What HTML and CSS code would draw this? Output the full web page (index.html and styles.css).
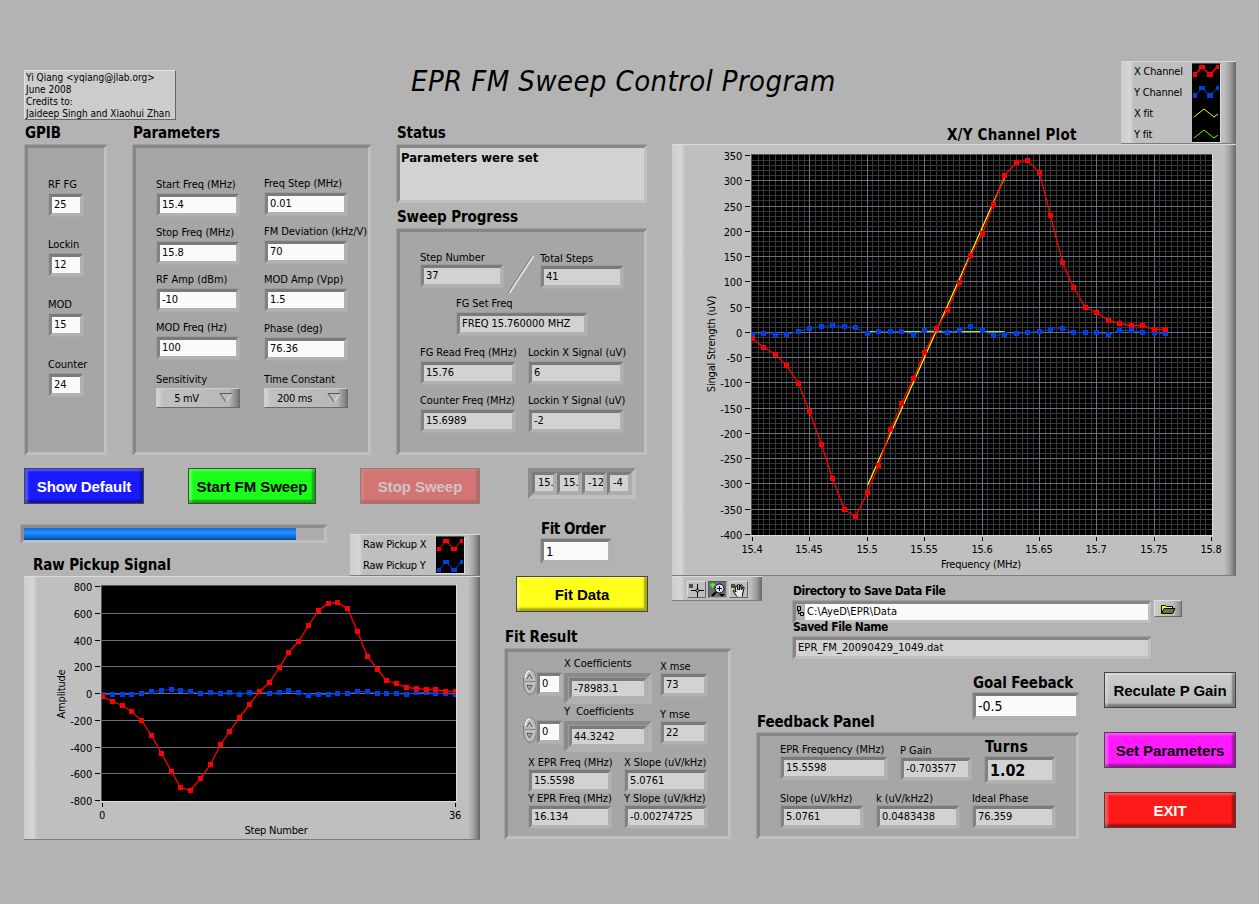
FILE: index.html
```
<!DOCTYPE html>
<html lang="en">

<head>
    <meta charset="UTF-8">
    <meta name="viewport" content="width=device-width, initial-scale=1.0">
    <link rel="stylesheet" href="styles.css">
    <title>EPR FM Sweep Control Program</title>
</head>

<body>
    <div class="front-panel">

        <div class="left-side">
            <header class="top">
                <div class="credits">Yi Qiang &lt;yqiang@jlab.org&gt;<br>June 2008<br>Credits to:<br>Jaideep Singh and Xiaohui Zhan</div>
                <h1>EPR FM Sweep Control Program</h1>
            </header>

            <div class="settings">
                <section class="gpib">
                    <h2>GPIB</h2>
                    <div class="frame">
                        <div class="item"><label>RF FG</label><div class="box control">25</div></div>
                        <div class="item"><label>Lockin</label><div class="box control">12</div></div>
                        <div class="item"><label>MOD</label><div class="box control">15</div></div>
                        <div class="item"><label>Counter</label><div class="box control">24</div></div>
                    </div>
                </section>

                <section class="parameters">
                    <h2>Parameters</h2>
                    <div class="frame">
                        <div class="param-col first">
                            <div class="item"><label>Start Freq (MHz)</label><div class="box control">15.4</div></div>
                            <div class="item"><label>Stop Freq (MHz)</label><div class="box control">15.8</div></div>
                            <div class="item"><label>RF Amp (dBm)</label><div class="box control">-10</div></div>
                            <div class="item"><label>MOD Freq (Hz)</label><div class="box control">100</div></div>
                            <div class="item"><label>Sensitivity</label>
                                <div class="ring"><span>5 mV</span><svg width="14" height="10"><path d="M13 .5L7 9" stroke="#e6e6e6" fill="none"/><path d="M13 .5H1L7 9" stroke="#555" fill="none"/></svg></div>
                            </div>
                        </div>
                        <div class="param-col second">
                            <div class="item"><label>Freq Step (MHz)</label><div class="box control">0.01</div></div>
                            <div class="item"><label>FM Deviation (kHz/V)</label><div class="box control">70</div></div>
                            <div class="item"><label>MOD Amp (Vpp)</label><div class="box control">1.5</div></div>
                            <div class="item"><label>Phase (deg)</label><div class="box control">76.36</div></div>
                            <div class="item"><label>Time Constant</label>
                                <div class="ring"><span>200 ms</span><svg width="14" height="10"><path d="M13 .5L7 9" stroke="#e6e6e6" fill="none"/><path d="M13 .5H1L7 9" stroke="#555" fill="none"/></svg></div>
                            </div>
                        </div>
                    </div>
                </section>

                <section class="status">
                    <h2>Status</h2>
                    <div class="frame message">Parameters were set</div>
                    <h2>Sweep Progress</h2>
                    <div class="frame progress">
                        <div class="steps">
                            <div class="item"><label>Step Number</label><div class="box">37</div></div>
                            <svg class="slash" width="28" height="40"><path d="M25 1L1 38" stroke="#6e6e6e"/><path d="M26.5 1L2.5 38" stroke="#e8e8e8" stroke-width="1.5"/></svg>
                            <div class="item total"><label>Total Steps</label><div class="box">41</div></div>
                        </div>
                        <div class="item set-freq"><label>FG Set Freq</label><div class="box">FREQ 15.760000 MHZ</div></div>
                        <div class="readings">
                            <div class="item"><label>FG Read Freq (MHz)</label><div class="box">15.76</div></div>
                            <div class="item"><label>Lockin X Signal (uV)</label><div class="box">6</div></div>
                            <div class="item"><label>Counter Freq (MHz)</label><div class="box">15.6989</div></div>
                            <div class="item"><label>Lockin Y Signal (uV)</label><div class="box">-2</div></div>
                        </div>
                    </div>
                </section>
            </div>

            <div class="actions">
                <button class="btn blue">Show Default</button>
                <button class="btn green">Start FM Sweep</button>
                <button class="btn disabled">Stop Sweep</button>
                <div class="array">
                    <div class="cell">15.</div>
                    <div class="cell">15.</div>
                    <div class="cell">-12</div>
                    <div class="cell">-4</div>
                </div>
            </div>

            <div class="lower-left">
                <div class="raw">
                    <div class="bar"><div class="bar-fill" style="width: 272px"></div></div>
                    <div class="raw-head">
                        <h2>Raw Pickup Signal</h2>
                        <div class="legend">
                            <div class="names"><span>Raw Pickup X</span><span>Raw Pickup Y</span></div>
                            <svg class="swatches" width="29" height="38">
                                <g fill="#f00"><path d="M3 12L10 4 18 12 25 4" stroke="#f00" fill="none"/><path d="M1 10h4v4h-4zM7 2h6v4h-6zM15 10h6v4h-6zM24 2h3v4h-3z"/></g>
                                <g fill="#0040e0"><path d="M3 33L10 25 18 33 25 25" stroke="#0040e0" fill="none"/><path d="M1 31h4v4h-4zM7 23h6v4h-6zM15 31h6v4h-6zM24 23h3v4h-3z"/></g>
                            </svg>
                        </div>
                    </div>
                    <div class="graph"><svg id="raw-graph" width="456" height="264"></svg></div>
                </div>

                <div class="fit">
                    <div class="fit-order"><h2>Fit Order</h2><div class="box control">1</div></div>
                    <button class="btn yellow">Fit Data</button>
                    <h2>Fit Result</h2>
                    <div class="frame">
                        <div class="coef">
                            <div class="index">
                                <svg width="14" height="26"><ellipse cx="7" cy="13" rx="6.5" ry="12.5" fill="#bdbdbd" stroke="#777"/><path d="M2 9Q3 2 7 1.500" stroke="#eee" stroke-width="1.500" fill="none"/><path d="M0 12.500h14" stroke="#888"/><path d="M4 10L6.500 5 9 10" stroke="#555" fill="none"/><path d="M4 16.500h5L6.500 21z" stroke="#555" fill="none"/></svg>
                                <div class="box control">0</div>
                            </div>
                            <div class="item value"><label>X Coefficients</label><div class="nested"><div class="box">-78983.1</div></div></div>
                            <div class="item mse"><label>X mse</label><div class="box">73</div></div>
                        </div>
                        <div class="coef">
                            <div class="index">
                                <svg width="14" height="26"><ellipse cx="7" cy="13" rx="6.5" ry="12.5" fill="#bdbdbd" stroke="#777"/><path d="M2 9Q3 2 7 1.500" stroke="#eee" stroke-width="1.500" fill="none"/><path d="M0 12.500h14" stroke="#888"/><path d="M4 10L6.500 5 9 10" stroke="#555" fill="none"/><path d="M4 16.500h5L6.500 21z" stroke="#555" fill="none"/></svg>
                                <div class="box control">0</div>
                            </div>
                            <div class="item value"><label>Y&nbsp; Coefficients</label><div class="nested"><div class="box">44.3242</div></div></div>
                            <div class="item mse"><label>Y mse</label><div class="box">22</div></div>
                        </div>
                        <div class="slopes">
                            <div class="item"><label>X EPR Freq (MHz)</label><div class="box">15.5598</div></div>
                            <div class="item"><label>X Slope (uV/kHz)</label><div class="box">5.0761</div></div>
                            <div class="item"><label>Y EPR Freq (MHz)</label><div class="box">16.134</div></div>
                            <div class="item"><label>Y Slope (uV/kHz)</label><div class="box">-0.00274725</div></div>
                        </div>
                    </div>
                </div>
            </div>
        </div>

        <div class="right-side">
            <div class="plot-head">
                <h2>X/Y Channel Plot</h2>
                <div class="legend">
                    <div class="names"><span>X Channel</span><span>Y Channel</span><span>X fit</span><span>Y fit</span></div>
                    <svg class="swatches" width="29" height="80">
                        <g fill="#f00"><path d="M3 11L10 3 18 11 25 3" stroke="#f00" stroke-width="1.500" fill="none"/><path d="M1 8h4v5h-4zM7 1h6v4h-6zM15 8h6v5h-6zM24 1h3v4h-3z"/></g>
                        <g fill="#0040e0"><path d="M3 32L10 24 18 32 25 24" stroke="#0040e0" fill="none"/><path d="M1 29h4v5h-4zM7 22h6v4h-6zM15 29h6v5h-6zM24 22h3v4h-3z"/></g>
                        <path d="M2 53L12 45 22 53 26 50" stroke="#ff0" fill="none"/>
                        <path d="M2 74L12 66 22 74 26 71" stroke="#60ff10" fill="none"/>
                    </svg>
                </div>
            </div>
            <div class="graph"><svg id="xy-graph" width="564" height="432"></svg></div>

            <div class="below-plot">
                <div class="palette">
                    <div class="tool"><svg width="18" height="16"><path d="M1 2h4v4h-4z" fill="#3d5c2e"/><path d="M3 8.500h5M11 8.500h5M9.500 2v5M9.500 10v5" stroke="#000"/><circle cx="9.500" cy="8.500" r="1.500" fill="none" stroke="#000"/></svg></div>
                    <div class="tool pressed"><svg width="18" height="16"><path d="M1 3h5M3.500 1v5" stroke="#4f2" stroke-width="1.500"/><circle cx="10.500" cy="6.500" r="4.500" fill="#dcdcf4" stroke="#000"/><path d="M8 6.500h5M10.500 4v5" stroke="#000"/><path d="M7 10L3 14" stroke="#000" stroke-width="2"/><path d="M10 12h6l-3 3z"/></svg></div>
                    <div class="tool"><svg width="18" height="16"><path d="M1 2h4v4h-4z" fill="#3d5c2e"/><path d="M7 14.500L3 9Q3.500 7.500 6 10L5 4.500Q6 3 7 4.500L8 8 7.500 3Q8.500 1 9.500 3V8L10.500 3Q12 2 12 3.500L11.500 8 13 5Q14.500 4.500 14 6.500L12.500 12V14.500" fill="#e8e8e8" stroke="#000"/></svg></div>
                </div>
                <div class="files">
                    <h3>Directory to Save Data File</h3>
                    <div class="path-row">
                        <div class="box control path"><svg width="8" height="14"><path d="M1.500 2.500h3v4h-3zM4.500 8.500h3v3h-3zM2.500 6.500v3h2" stroke="#000" fill="none"/></svg><span>C:\AyeD\EPR\Data</span></div>
                        <button class="browse"><svg width="16" height="12"><path d="M1.500 10V2.500h4l1 1h6V5" fill="#ff0" stroke="#000"/><path d="M1.500 10.500L4 5.500h11L12.500 10.500z" fill="#77752c" stroke="#000"/></svg></button>
                    </div>
                    <h3 class="saved">Saved File Name</h3>
                    <div class="box path">EPR_FM_20090429_1049.dat</div>
                </div>
            </div>

            <div class="lower-right">
                <div class="feedback">
                    <div class="goal"><h2>Goal Feeback</h2><div class="box control">-0.5</div></div>
                    <h2>Feedback Panel</h2>
                    <div class="frame">
                        <div class="feedback-row">
                            <div class="item epr"><label>EPR Frequency (MHz)</label><div class="box">15.5598</div></div>
                            <div class="item gain"><label>P Gain</label><div class="box">-0.703577</div></div>
                            <div class="item turns"><label>Turns</label><div class="box">1.02</div></div>
                        </div>
                        <div class="feedback-row second">
                            <div class="item"><label>Slope (uV/kHz)</label><div class="box">5.0761</div></div>
                            <div class="item"><label>k (uV/kHz2)</label><div class="box">0.0483438</div></div>
                            <div class="item"><label>Ideal Phase</label><div class="box">76.359</div></div>
                        </div>
                    </div>
                </div>
                <div class="main-buttons">
                    <button class="btn gray">Reculate P Gain</button>
                    <button class="btn magenta">Set Parameters</button>
                    <button class="btn red">EXIT</button>
                </div>
            </div>
        </div>

    </div>
    <script src="script.js"></script>
</body>

</html>
```

FILE: styles.css
```
* {
    box-sizing: border-box;
}

body {
    margin: 0;
    background-color: #b3b3b3;
    font-family: 'DejaVu Sans Condensed', 'DejaVu Sans', sans-serif;
    font-stretch: condensed;
    font-size: 11px;
    letter-spacing: -0.05px;
    color: #000;
}

h1, h2, h3 {
    margin: 0;
    white-space: nowrap;
}

h1 {
    margin-left: 235px;
    font-size: 29px;
    font-weight: normal;
    font-style: italic;
    line-height: 22px;
    letter-spacing: 0.4px;
}

h2 {
    height: 24px;
    padding-left: 1px;
    font-size: 15px;
    line-height: 26px;
    letter-spacing: -0.1px;
}

h3 {
    height: 24px;
    padding-left: 1px;
    font-size: 12px;
    line-height: 30px;
    letter-spacing: -0.45px;
}

svg {
    display: block;
    flex: none;
}

.front-panel {
    display: flex;
    width: 1259px;
    height: 904px;
    padding-left: 24px;
    overflow: hidden;
}

.left-side {
    flex: none;
    width: 648px;
}

.right-side {
    flex: none;
    width: 564px;
}

/* sunken frames and boxes, the outline softens the outer pixel of the bevel */

.frame {
    border: 4px solid;
    border-color: #868686 #c0c0c0 #c0c0c0 #868686;
    outline: 1px solid rgba(174, 174, 174, 0.7);
    outline-offset: -1px;
    background-color: #a6a6a6;
}

.box {
    height: 24px;
    padding-left: 2px;
    border: 4px solid;
    border-color: #7a7a7a #b2b2b2 #b2b2b2 #828282;
    outline: 1px solid rgba(170, 170, 170, 0.7);
    outline-offset: -1px;
    background-color: #d2d2d2;
    line-height: 16px;
    white-space: nowrap;
}

.control {
    background-color: #fafafa;
}

.item {
    width: 84px;
}

.item label {
    display: block;
    height: 16px;
    line-height: 15px;
    white-space: nowrap;
}

.top {
    display: flex;
    align-items: flex-start;
    height: 120px;
    padding-top: 70px;
}

.credits {
    flex: none;
    width: 152px;
    height: 50px;
    padding: 1px 0 0 1px;
    border: 1px solid;
    border-color: #e4e4e4 #666 #666 #e4e4e4;
    background-color: #ccc;
    font-size: 10px;
    line-height: 12px;
    letter-spacing: 0.02px;
    white-space: nowrap;
}

.settings {
    display: flex;
    gap: 24px;
}

.gpib {
    width: 84px;
}

.gpib .frame {
    height: 312px;
    padding: 29px 0 0 20px;
}

.gpib .item {
    width: 36px;
    height: 60px;
}

.parameters {
    width: 240px;
}

.parameters .frame {
    display: flex;
    gap: 24px;
    height: 312px;
    padding-left: 20px;
}

.param-col {
    display: grid;
    align-content: start;
    width: 84px;
}

.param-col.first {
    padding-top: 29px;
    grid-template-rows: 48px 47px 48px 52px 40px;
}

.param-col.second {
    padding-top: 28px;
    grid-template-rows: 48px 48px 49px 51px 40px;
}

.ring {
    display: flex;
    align-items: center;
    height: 20px;
    padding-right: 6px;
    border: 1px solid;
    border-color: #ccc #6a6a6a #6a6a6a #ccc;
    background: linear-gradient(90deg, #d8d8d8 0, #c0c0c0 6px, #b8b8b8 72px, #777 82px);
}

.ring span {
    flex: 1;
    padding-right: 3px;
    text-align: center;
    letter-spacing: -0.3px;
}

.status {
    width: 252px;
}

.message {
    height: 60px;
    padding: 1px 0 0 1px;
    background-color: #d2d2d2;
    font-size: 13px;
    font-weight: bold;
    line-height: 17px;
    letter-spacing: 0;
}

.progress {
    height: 228px;
    padding: 18px 0 0 20px;
}

.steps {
    display: flex;
    height: 46px;
}

.steps label {
    height: 14px;
}

.steps .total {
    margin-top: 1px;
}

.slash {
    margin: 5px 5px 0 3px;
}

.item.set-freq {
    width: 132px;
    height: 49px;
    margin-left: 36px;
}

.readings {
    display: grid;
    grid-template-columns: 96px 96px;
    grid-auto-rows: 48px;
    column-gap: 12px;
}

.readings .item {
    width: 96px;
}

.actions {
    display: flex;
    margin-top: 12px;
    height: 36px;
}

.btn {
    flex: none;
    width: 120px;
    height: 36px;
    margin: 0;
    padding: 0;
    border: 1px solid #444;
    box-shadow: inset 3px 2px 2px rgba(255, 255, 255, 0.25), inset -3px -3px 2px rgba(0, 0, 0, 0.35);
    font-family: 'Liberation Sans', Arial, sans-serif;
    font-size: 15px;
    font-weight: bold;
    letter-spacing: -0.05px;
    white-space: nowrap;
}

.blue {
    background-color: #1a1aff;
    color: #fff;
}

.green {
    width: 128px;
    margin-left: 44px;
    background-color: #1aff1a;
}

.disabled {
    margin-left: 44px;
    border-color: #8e8080;
    background-color: #d47575;
    box-shadow: inset 3px 2px 2px rgba(255, 255, 255, 0.08), inset -3px -3px 2px rgba(0, 0, 0, 0.12);
    color: #d0c4c4;
}

.yellow {
    width: 132px;
    background-color: #ffff1a;
}

.gray {
    background: linear-gradient(#cdcdcd, #b8b8b8);
}

.magenta {
    background-color: #ff1aff;
}

.red {
    background-color: #ff1a1a;
    color: #fff;
}

.array {
    display: flex;
    width: 108px;
    height: 31px;
    margin-left: 48px;
    border: 4px solid;
    border-color: #8c8c8c #bfbfbf #bfbfbf #8c8c8c;
}

.cell {
    width: 25px;
    padding-left: 3px;
    border: solid;
    border-width: 3px 4px 4px 3px;
    border-color: #7c7c7c #adadad #adadad #7c7c7c;
    background-color: #d2d2d2;
    line-height: 16px;
    overflow: hidden;
}

.lower-left {
    display: flex;
    gap: 24px;
}

.raw {
    flex: none;
    width: 456px;
}

.bar {
    width: 308px;
    height: 20px;
    margin: 20px 0 0 -4px;
    border: 4px solid;
    border-color: #8c8c8c #bfbfbf #bfbfbf #8c8c8c;
    outline: 1px solid rgba(174, 174, 174, 0.7);
    outline-offset: -1px;
    background-color: #adadad;
}

.bar-fill {
    height: 12px;
    background: linear-gradient(#1468d8, #2090ff 40%, #1070e0 70%, #0848a0);
}

.raw-head {
    display: flex;
    align-items: flex-start;
    justify-content: space-between;
    height: 42px;
    margin-top: -10px;
}

.raw-head h2 {
    padding: 18px 0 0 9px;
}

/* graph surface shared by the plots, legends and the palette */

.graph,
.legend,
.palette {
    border: solid;
    border-width: 1px 0 1px 0;
    border-color: #dadada #555 #7d7d7d #dadada;
    background: linear-gradient(90deg, #cdcdcd 0, #d6d6d6 9px, #bfbfbf 13px, #bfbfbf calc(100% - 12px), #a0a0a0 calc(100% - 6px), #666 100%);
}

.graph svg {
    margin: -1px 0;
}

.graph text {
    font-size: 11px;
    letter-spacing: -0.2px;
}

.legend {
    display: flex;
    flex: none;
    justify-content: space-between;
    width: 130px;
    height: 42px;
    padding: 0 15px 0 13px;
}

.names {
    display: flex;
    flex-direction: column;
    margin-top: -1px;
    line-height: 21px;
    letter-spacing: -0.2px;
    white-space: nowrap;
}

.swatches {
    margin-top: 1px;
    background-color: #000;
    border: solid;
    border-width: 1px 1px 1px 0;
    border-color: #555 #ddd #ddd #555;
}

.fit {
    flex: none;
    width: 228px;
    padding-top: 10px;
}

.fit-order {
    width: 72px;
    height: 62px;
    margin-left: 36px;
}

.fit-order h2 {
    line-height: 30px;
    letter-spacing: -0.5px;
}

.fit-order .box {
    height: 26px;
    line-height: 19px;
    font-size: 13px;
}

.fit .btn {
    display: block;
    margin-left: 12px;
}

.fit > h2 {
    margin-top: 12px;
}

.fit .frame {
    height: 192px;
    padding: 4px 0 0 15px;
}

.coef {
    display: flex;
    align-items: flex-start;
    height: 48px;
}

.index {
    display: flex;
    align-items: flex-start;
    width: 41px;
    padding-top: 13px;
}

.index .box {
    width: 27px;
    height: 24px;
    margin: 3px 0 0 -1px;
}

.coef .value {
    width: 88px;
}

.coef .value label {
    height: 17px;
}

.nested {
    border: 4px solid;
    border-color: #8a8a8a #b2b2b2 #b2b2b2 #8a8a8a;
}

.nested .box {
    height: 23px;
    line-height: 15px;
}

.coef .mse {
    width: 48px;
    margin: 3px 0 0 8px;
}

.coef .mse label {
    height: 14px;
}

.slopes {
    display: grid;
    grid-template-columns: 84px 84px;
    grid-auto-rows: 36px;
    column-gap: 12px;
    padding: 3px 0 0 5px;
}

.slopes label {
    height: 14px;
}

.plot-head {
    display: flex;
    align-items: flex-end;
    justify-content: flex-end;
    height: 144px;
}

.plot-head h2 {
    width: 175px;
    line-height: 30px;
    letter-spacing: 0.2px;
}

.plot-head .legend {
    width: 115px;
    height: 83px;
}

.below-plot {
    display: flex;
    align-items: flex-start;
    gap: 30px;
    height: 84px;
}

.palette {
    display: flex;
    gap: 2px;
    width: 90px;
    height: 25px;
    padding: 4px 0 0 15px;
}

.tool {
    width: 19px;
    height: 17px;
    border: 1px solid;
    border-color: #ddd #666 #666 #ddd;
}

.tool.pressed {
    border-color: #555 #aaa #aaa #555;
    background-color: #6e6e6e;
}

.path-row {
    display: flex;
    gap: 2px;
}

.box.path {
    display: flex;
    width: 360px;
    border-color: #868686 #bfbfbf #bfbfbf #868686;
    letter-spacing: 0.1px;
}

.control.path {
    padding-left: 0;
    background: linear-gradient(90deg, #b3b3b3 9px, #fafafa 9px);
}

.path span {
    padding-left: 3px;
}

.browse {
    width: 28px;
    height: 17px;
    margin: 0;
    padding: 1px 5px;
    border: 1px solid;
    border-color: #ddd #666 #666 #ddd;
    background: linear-gradient(90deg, #ccc, #bbb 70%, #888);
}

.saved {
    height: 12px;
    line-height: 6px;
}

.lower-right {
    display: flex;
    gap: 24px;
    padding-left: 84px;
}

.feedback {
    width: 324px;
}

.goal {
    width: 108px;
    height: 60px;
    margin-left: 216px;
}

.goal h2 {
    height: 32px;
    line-height: 46px;
}

.goal .box {
    height: 28px;
    font-size: 14px;
    line-height: 21px;
}

.feedback > h2 {
    margin-top: -12px;
    line-height: 28px;
}

.feedback .frame {
    height: 108px;
    padding: 6px 0 0 20px;
}

.feedback-row {
    display: flex;
    gap: 12px;
    height: 49px;
}

.feedback-row label {
    height: 14px;
}

.feedback-row .epr {
    width: 108px;
}

.feedback-row .gain {
    width: 72px;
    margin-top: 1px;
}

.feedback-row .turns {
    width: 72px;
}

.turns label {
    padding-left: 1px;
    font-size: 15px;
    font-weight: bold;
    line-height: 10px;
    letter-spacing: 0.3px;
}

.turns .box {
    height: 28px;
    font-size: 16px;
    font-weight: bold;
    line-height: 21px;
}

.main-buttons {
    display: flex;
    flex-direction: column;
    gap: 24px;
    padding-top: 12px;
}

.main-buttons .btn {
    width: 132px;
}
```

FILE: script.js
```
const NS = 'http://www.w3.org/2000/svg';

const rawX = [-22, -57, -87, -132, -199, -311, -446, -581, -700, -723, -633, -528, -379, -282, -177, -80, 17, 85, 197,
    309, 391, 511, 623, 675, 683, 638, 466, 279, 182, 100, 77, 47, 40, 32, 32, 17, 17];
const rawY = [-5, -5, -5, -5, 2, 17, 25, 32, 25, 17, 2, 10, 2, 10, -5, 10, 15, 2, 10, 25, 10, -12, -5, -5, 2, 2, 17, 17,
    2, 2, 2, -5, 10, 10, 2, 2, -5];
const channelX = [-12, -30, -44, -66, -101, -157, -222, -289, -350, -364, -317, -263, -192, -141, -91, -40, 8, 43, 99,
    152, 196, 253, 310, 336, 340, 316, 231, 138, 89, 49, 39, 23, 18, 14, 14, 6, 6];
const channelY = [-4, -2, -4, -4, 2, 8, 12, 14, 12, 10, -2, 2, 2, 2, -4, 4, 6, 0, 4, 12, 4, -6, -4, -2, 0, 2, 6, 8, 0, 0,
    0, -4, 4, 4, 0, 0, -2];

function add(svg, name, attrs, text) {
    const el = document.createElementNS(NS, name);
    for (const key in attrs) {
        el.setAttribute(key, attrs[key]);
    }
    if (text !== undefined) {
        el.textContent = text;
    }
    svg.appendChild(el);
    return el;
}

function rect(svg, x, y, width, height, fill) {
    add(svg, 'rect', { x: x, y: y, width: width, height: height, fill: fill });
}

function drawGraph(g) {
    const svg = document.getElementById(g.id);
    // the small offset keeps float noise from splitting a grid line over two pixels
    const px = v => Math.round(g.left + (v - g.xMin) / (g.xMax - g.xMin) * (g.right - g.left) + 1e-6);
    const py = v => Math.round(g.top + (g.yMax - v) / (g.yMax - g.yMin) * (g.bottom - g.top) + 1e-6);
    const w = g.right - g.left + 1;
    const h = g.bottom - g.top + 1;

    // plot area with a sunken edge
    rect(svg, g.left - 1, g.top - 1, w + 2, h + 2, '#ddd');
    rect(svg, g.left - 1, g.top - 1, w + 1, h + 1, '#555');
    rect(svg, g.left, g.top, w, h, '#000');

    // minor grid
    for (let i = 1; i < g.minorX; i++) {
        rect(svg, px(g.xMin + (g.xMax - g.xMin) * i / g.minorX), g.top, 1, h, '#383838');
    }
    for (let i = 1; i < g.minorY; i++) {
        rect(svg, g.left, py(g.yMin + (g.yMax - g.yMin) * i / g.minorY), w, 1, '#383838');
    }

    for (let v = g.yMin; v <= g.yMax; v += g.stepY) {
        const y = py(v);
        if (v > g.yMin && v < g.yMax) {
            rect(svg, g.left, y, w, 1, '#6c6c82');
        }
        rect(svg, g.left - 7, y, 5, 1, '#000');
        add(svg, 'text', { x: g.left - 10, y: y + 4.5, 'text-anchor': 'end' }, v);
    }
    g.ticksX.forEach(v => {
        const x = px(v);
        if (v > g.xMin && v < g.xMax) {
            rect(svg, x, g.top, 1, h, '#6c6c82');
        }
        rect(svg, x, g.bottom + 3, 1, 4, '#000');
        add(svg, 'text', { x: x, y: g.bottom + 19, 'text-anchor': 'middle' }, v);
    });

    g.lines.forEach(line => {
        const points = line.points.map(p => [px(p[0]), py(p[1])]);
        add(svg, 'polyline', {
            points: points.map(p => (p[0] + 0.5) + ',' + (p[1] + 0.5)).join(' '),
            fill: 'none', stroke: line.color, 'stroke-width': line.width || 1
        });
        if (line.marks) {
            points.forEach(p => {
                const x = Math.max(p[0] - 2, g.left);
                rect(svg, x, p[1] - 2, Math.min(p[0] + 3, g.right + 1) - x, 5, line.color);
            });
        }
    });

    add(svg, 'text', { x: g.titleX[0], y: g.titleX[1], 'text-anchor': 'middle' }, g.xName);
    add(svg, 'text', {
        transform: 'translate(' + g.titleY[0] + ' ' + g.titleY[1] + ') rotate(-90)', 'text-anchor': 'middle'
    }, g.yName);
}

const series = (data, start, step) => data.map((v, i) => [start + i * step, v]);

drawGraph({
    id: 'raw-graph',
    left: 78, right: 431, top: 10, bottom: 224,
    xMin: 0, xMax: 36, yMin: -800, yMax: 800,
    minorX: 0, minorY: 0, stepY: 200, ticksX: [0, 36],
    xName: 'Step Number', yName: 'Amplitude',
    titleX: [252, 258], titleY: [41, 118],
    lines: [
        { points: series(rawY, 0, 1), color: '#0040e0', marks: true },
        { points: series(rawX, 0, 1), color: '#f00', width: 1.3, marks: true }
    ]
});

drawGraph({
    id: 'xy-graph',
    left: 80, right: 539, top: 11, bottom: 390,
    xMin: 15.4, xMax: 15.8, yMin: -400, yMax: 350,
    minorX: 80, minorY: 75, stepY: 50,
    ticksX: [15.4, 15.45, 15.5, 15.55, 15.6, 15.65, 15.7, 15.75, 15.8],
    xName: 'Frequency (MHz)', yName: 'Singal Strength (uV)',
    titleX: [309, 424], titleY: [43, 200],
    lines: [
        { points: [[15.5, 2], [15.62, 2]], color: '#80ff20' },
        { points: series(channelY, 15.4, 0.01), color: '#0040e0', marks: true },
        { points: [[15.5, -303], [15.62, 306]], color: '#ff0', width: 1.2 },
        { points: series(channelX, 15.4, 0.01), color: '#f00', width: 1.3, marks: true }
    ]
});
```
